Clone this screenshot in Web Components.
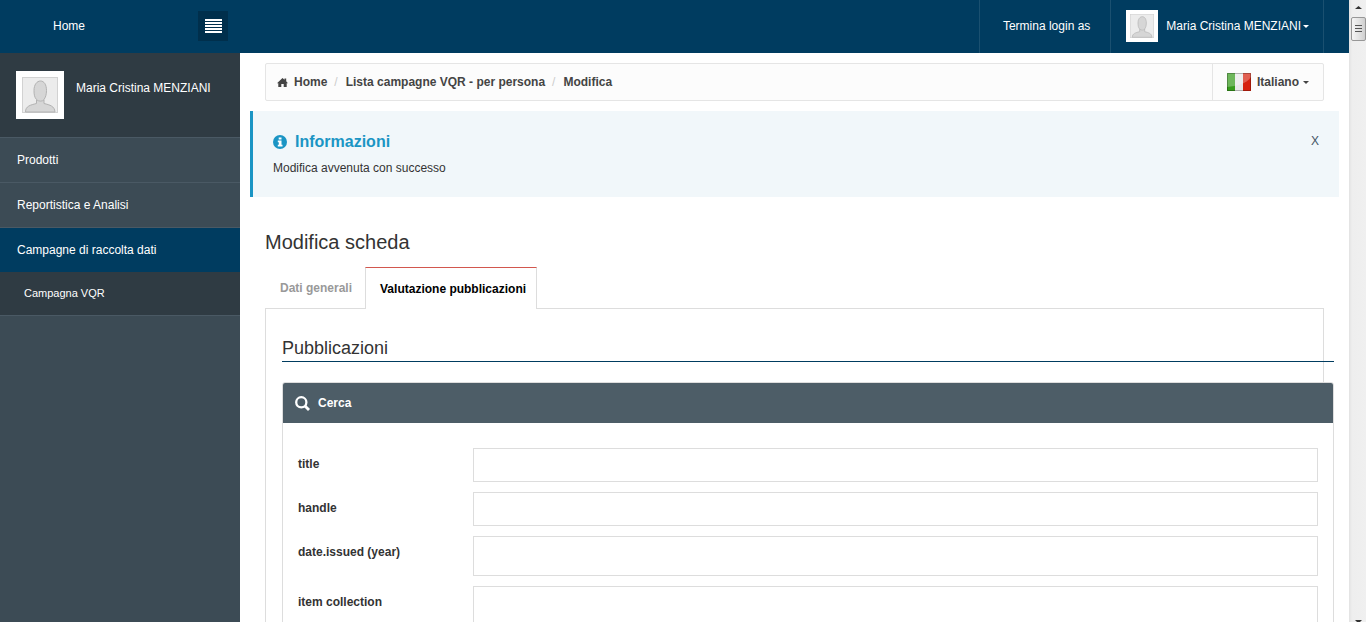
<!DOCTYPE html>
<html lang="it">
<head>
<meta charset="utf-8">
<title>Modifica scheda</title>
<style>
  html, body { margin: 0; height: 100%; }
  body { font: 12px/20px "Liberation Sans", Arial, sans-serif; color: #333; background: #fff; overflow: hidden; }
</style>
</head>
<body>
<app-shell>
  <top-bar slot="top"></top-bar>
  <side-bar slot="side">
    <nav-item>Prodotti</nav-item>
    <nav-item>Reportistica e Analisi</nav-item>
    <nav-item active>Campagne di raccolta dati</nav-item>
    <nav-item sub>Campagna VQR</nav-item>
  </side-bar>
  <crumb-bar></crumb-bar>
  <info-alert heading="Informazioni">Modifica avvenuta con successo</info-alert>
  <tab-card heading="Modifica scheda">
    <section-title>Pubblicazioni</section-title>
    <search-panel heading="Cerca">
      <form-row label="title"></form-row>
      <form-row label="handle"></form-row>
      <form-row label="date.issued (year)" tall></form-row>
      <form-row label="item collection" tall></form-row>
    </search-panel>
  </tab-card>
  <scroll-rail slot="rail"></scroll-rail>
</app-shell>

<script>
const define = (name, render) => customElements.define(name, class extends HTMLElement {
  connectedCallback() {
    if (this.shadowRoot) return;
    const t = document.createElement('template');
    t.innerHTML = '<style>*{box-sizing:border-box}:host{display:block;box-sizing:border-box}button,select,input{font:inherit;color:inherit}button{cursor:pointer}a{color:inherit;text-decoration:none}</style>' + render(this);
    this.attachShadow({ mode: 'open' }).append(t.content.cloneNode(true));
  }
});

define('app-shell', () => `
  <style>
    :host { display: grid; grid-template-columns: 240px minmax(0, 1fr) 17px; grid-template-rows: 53px minmax(0, 1fr); height: 100vh; overflow: hidden; }
    header { grid-column: 1 / 3; }
    aside { grid-row: 2; background: #3c4b55; }
    main { grid-row: 2; padding: 10px 25px 0; overflow: hidden; }
    .rail { grid-column: 3; grid-row: 1 / 3; }
    .rail ::slotted(*) { height: 100%; }
  </style>
  <header><slot name="top"></slot></header>
  <aside><slot name="side"></slot></aside>
  <main><slot></slot></main>
  <div class="rail"><slot name="rail"></slot></div>`);

define('user-avatar', () => `
  <style>
    :host { flex: none; width: var(--size, 48px); height: var(--size, 48px); }
    svg { display: block; width: 100%; height: 100%; }
  </style>
  <svg viewBox="0 0 48 48" role="img" aria-label="Foto utente">
    <rect width="48" height="48" fill="#fff"/>
    <rect x="6.500" y="6.500" width="35" height="35" fill="#ececec" stroke="#d2d2d2"/>
    <path d="M9.500 41c0-6 5-7 11-8.500v-4c-2-2-2.500-5-2.500-9 0-6 3-9.500 6.500-9.500s6 3.500 6 9.500c0 4-1 7-2.500 9v4c6 1.500 10.500 2.500 11 8.500z" fill="#d6d6d6" stroke="#b2b2b2"/>
    <path d="M21 29c2 1.500 5 1.500 7 0" fill="none" stroke="#b5b5b5"/>
  </svg>`);

define('top-bar', () => `
  <style>
    :host { display: flex; height: 100%; background: #003c60; color: #fff; padding-right: 25px; }
    .brand { width: 240px; display: flex; align-items: center; justify-content: space-between; padding: 0 12px 1px 53px; }
    .brand button { width: 30px; height: 30px; padding: 0; border: 0; background: #002f4c; display: grid; place-items: center; }
    nav { margin-left: auto; display: flex; border-right: 1px solid #1a5070; }
    nav > * { display: flex; align-items: center; border: 0; border-left: 1px solid #1a5070; background: none; }
    .end { padding: 0 20px 1px 23px; }
    .user { padding: 0 14px 1px 15px; }
    user-avatar { --size: 32px; margin-right: 8px; }
    .user svg { margin-left: 2px; }
  </style>
  <div class="brand"><a href="#">Home</a>
    <button aria-label="Menu"><svg width="17" height="14" fill="#fff"><path d="M0 0h17v2H0zM0 3h17v2H0zM0 6h17v2H0zM0 9h17v2H0zM0 12h17v2H0z"/></svg></button>
  </div>
  <nav>
    <a class="end" href="#">Termina login as</a>
    <button class="user"><user-avatar></user-avatar>Maria Cristina MENZIANI<svg width="6" height="3"><path d="M0 0h6L3 3z" fill="#fff"/></svg></button>
  </nav>`);

define('side-bar', () => `
  <style>
    :host { color: #fff; }
    .who { display: flex; gap: 12px; height: 84px; padding: 18px 16px; background: #2f3b43; }
    .who span { padding-top: 7px; }
  </style>
  <div class="who"><user-avatar></user-avatar><span>Maria Cristina MENZIANI</span></div>
  <nav><slot></slot></nav>`);

define('nav-item', () => `
  <style>
    a { display: block; padding: 12px 17px; border-top: 1px solid #4a5964; }
    :host([active]) a { background: #003c60; }
    :host([sub]) a { background: #2f3b43; font-size: 11px; padding: 11px 24px 12px; border-top: 0; border-bottom: 1px solid #4a5964; }
  </style>
  <a href="#"><slot></slot></a>`);

define('crumb-bar', () => `
  <style>
    :host { display: flex; align-items: center; height: 38px; border: 1px solid #e5e5e5; border-radius: 2px; background: #fcfcfc; font-weight: bold; color: #444; }
    nav { display: flex; align-items: center; flex: 1; padding-left: 11px; }
    nav a { display: flex; align-items: center; gap: 6px; }
    i { font-style: normal; font-weight: normal; color: #ccc; margin: 0 8px 0 7px; }
    .lang { display: flex; align-items: center; align-self: stretch; padding: 0 14px; border-left: 1px solid #e5e5e5; }
    select { appearance: none; border: 0; background: none; padding: 0; margin: 0 4px 0 6px; width: 42px; }
  </style>
  <nav aria-label="Percorso">
    <a href="#"><svg width="11" height="9" fill="#444"><path d="M5.500 0L7.500 1.800V.5H9.200V3.300L11 5.200H9.700V9H6.700V6H4.300V9H1.300V5.200H0z"/></svg>Home</a><i>/</i>
    <a href="#">Lista campagne VQR - per persona</a><i>/</i>
    <span>Modifica</span>
  </nav>
  <div class="lang">
    <svg width="24" height="18"><path fill="#379b1c" d="M0 0h8v18H0z"/><path fill="#e8e8e8" d="M8 0h8v18H8z"/><path fill="#d6220f" d="M16 0h8v18h-8z"/><path fill="#fff" opacity=".28" d="M0 0h24v4C19 11 10 13 0 14z"/><path fill="none" stroke="#000" opacity=".25" d="M.5.5h23v17H.5z"/></svg>
    <select aria-label="Lingua"><option>Italiano</option></select>
    <svg width="6" height="3"><path d="M0 0h6L3 3z" fill="#444"/></svg>
  </div>`);

define('info-alert', el => `
  <style>
    :host { display: flex; justify-content: space-between; align-items: flex-start; margin: 10px -15px 0; height: 86px; padding: 20px; border-left: 3px solid #1b95c4; background: #f1f7fa; }
    h4 { display: flex; align-items: center; gap: 8px; margin: 0 0 6px; padding-top: 1px; font-size: 16px; line-height: 20px; color: #1b95c4; }
    p { margin: 0; }
    button { border: 0; background: none; padding: 0; color: #456; }
  </style>
  <div>
    <h4><svg width="14" height="14"><circle cx="7" cy="7" r="7" fill="#1b95c4"/><path fill="#fff" d="M5.700 2.500h2.800v2H5.700zM4.800 5.500h3.700v4.200h1v1.800H4.800V9.700h1V7.300h-1z"/></svg>${el.getAttribute('heading')}</h4>
    <p><slot></slot></p>
  </div>
  <button aria-label="Chiudi">X</button>`);

define('tab-card', el => `
  <style>
    h3 { margin: 35px 0 15px; font-size: 20px; line-height: 20px; font-weight: normal; }
    .tabs { display: flex; }
    .tabs button { height: 41px; padding: 0 13px 0 15px; border: 0; background: #fff; font-weight: bold; color: #999; }
    .tabs button[aria-selected=true] { height: 42px; padding: 0 10px 0 14px; margin-bottom: -1px; border: 1px solid #ddd; border-top-color: #d2574e; border-bottom: 0; color: #000; z-index: 1; }
    .body { border: 1px solid #ddd; padding: 29px 0 16px 16px; }
    .wide { margin-right: -11px; }
  </style>
  <h3>${el.getAttribute('heading')}</h3>
  <div class="tabs" role="tablist">
    <button role="tab" aria-selected="false">Dati generali</button>
    <button role="tab" aria-selected="true">Valutazione pubblicazioni</button>
  </div>
  <div class="body"><div class="wide"><slot></slot></div></div>`);

define('section-title', () => `
  <style>h4 { margin: 0 0 20px; padding-bottom: 3px; border-bottom: 1px solid #003c60; font-size: 18px; line-height: 20px; font-weight: normal; }</style>
  <h4><slot></slot></h4>`);

define('search-panel', el => `
  <style>
    :host { border: 1px solid #ddd; border-radius: 3px 3px 0 0; background: #fff; font-weight: bold; }
    header { display: flex; align-items: center; gap: 8px; height: 40px; padding: 0 12px; border-radius: 2px 2px 0 0; background: #4d5d67; color: #fff; }
    .rows { display: grid; gap: 10px; padding: 25px 15px; }
  </style>
  <header><svg width="15" height="15" fill="none" stroke="#fff"><circle cx="6.300" cy="6.300" r="5.100" stroke-width="2.300"/><path d="M10 10l4 4" stroke-width="2.800"/></svg>${el.getAttribute('heading')}</header>
  <form class="rows"><slot></slot></form>`);

define('form-row', el => `
  <style>
    :host { display: grid; grid-template-columns: 175px minmax(0, 1fr); }
    label { padding-top: 6px; }
    input { width: 100%; height: 34px; border: 1px solid #ddd; border-radius: 0; padding: 0 10px; background: #fff; font-weight: normal; }
    :host([tall]) input { height: 40px; }
  </style>
  <label for="field">${el.getAttribute('label')}</label><input id="field" type="text">`);

define('scroll-rail', () => `
  <style>
    :host { display: flex; flex-direction: column; align-items: center; background: linear-gradient(90deg, #e2e2e2, #eee 3px, #f0f0f0); padding-left: 1px; }
    .up { flex: none; margin: 6px 0 8px; }
    .thumb { flex: none; width: 15px; height: 24px; border: 1px solid #979797; border-radius: 2px; background: linear-gradient(90deg, #f5f5f5, #e4e4e4 50%, #cfcfcf); display: grid; place-items: center; }
    .down { flex: none; margin-top: auto; }
  </style>
  <svg class="up" width="7" height="3"><path d="M0 3L3.500 0 7 3z" fill="#333"/></svg>
  <div class="thumb"><svg width="7" height="8" fill="#555"><path d="M0 0h7v1H0zM0 3h7v1H0zM0 6h7v1H0z"/></svg></div>
  <svg class="down" width="7" height="2"><path d="M0 0h7L5 2H2z" fill="#333"/></svg>`);
</script>
</body>
</html>
